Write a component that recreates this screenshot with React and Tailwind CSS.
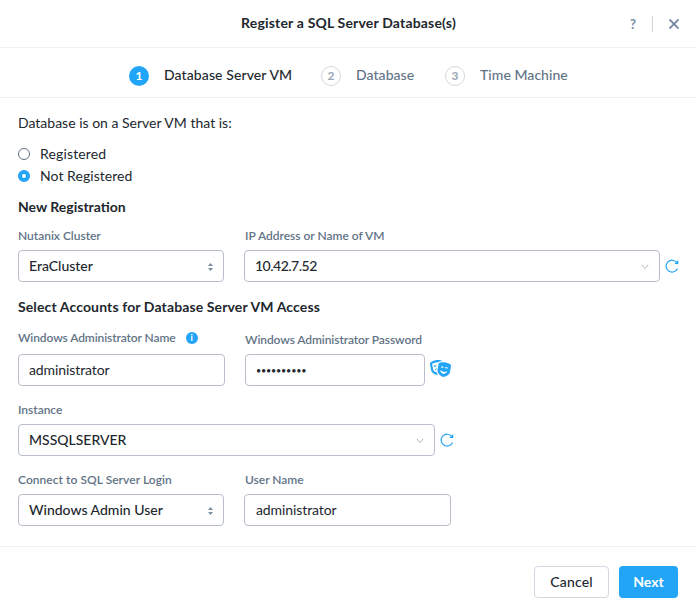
import { FaTheaterMasks } from "react-icons/fa";

function Step({ n, active, children, className }) {
  return (
    <div className={`flex items-center ${className}`}>
      <span
        className={`flex size-5 items-center justify-center rounded-full text-[12px] font-bold ${
          active ? "bg-[#22a5f7] text-white" : "border border-[#d3d7e0] text-[#9aa5b5]"
        }`}
      >
        {n}
      </span>
      <span
        className={`mb-0.5 ml-[15px] whitespace-nowrap ${
          active ? "tracking-[0.1px] text-[#22272e]" : "tracking-[0.05px] text-[#627386]"
        }`}
      >
        {children}
      </span>
    </div>
  );
}

function Label({ children, className = "" }) {
  return (
    <div className={`flex h-5 items-center whitespace-nowrap text-[12px] font-semibold tracking-[-0.02px] text-[#627386] ${className}`}>
      {children}
    </div>
  );
}

function Box({ children, icon, className }) {
  return (
    <div
      className={`flex h-8 items-center justify-between rounded-[4px] border border-[#b8bfca] bg-white pl-2.5 pr-2.5 whitespace-nowrap ${className}`}
    >
      {children}
      {icon}
    </div>
  );
}

function Sorter() {
  return (
    <svg className="mt-0.5" width="5" height="8" viewBox="0 0 5 8" fill="#7b8c9f">
      <path d="M2.5 0 5 3H0Z M2.5 8 0 5H5Z" />
    </svg>
  );
}

function Chevron() {
  return (
    <svg className="mt-px" width="8" height="6" viewBox="0 0 8 6" fill="none" stroke="#b7b7b7">
      <path d="M0.8 0.8 4 4.6 7.2 0.8" />
    </svg>
  );
}

function Refresh() {
  return (
    <svg className="ml-[5px]" width="14" height="14" viewBox="0 0 14 14" fill="none" stroke="#22a5f7" strokeWidth="1.2">
      <path d="M12.5 9.4A5.9 5.9 0 1 1 12 3.9" />
      <path d="M13.3 1V5H9.3Z" fill="#22a5f7" stroke="none" />
    </svg>
  );
}

export default function App() {
  return (
    <div className="flex h-[615px] w-[696px] flex-col bg-white font-[Lato,sans-serif] text-[14px] leading-5 text-[#22272e]">
      <header className="flex h-12 shrink-0 items-center border-b border-[#f0f1f3] pr-[17px]">
        <span className="w-[67px]" />
        <h1 className="mb-0.5 flex-1 text-center font-bold tracking-[0.18px]">Register a SQL Server Database(s)</h1>
        <span className="text-[13px] font-bold text-[#7b8ca0]">?</span>
        <span className="mx-4 h-4 w-px bg-[#d0d6de]" />
        <svg width="10" height="10" viewBox="0 0 10 10" stroke="#7486a0" strokeWidth="1.9">
          <path d="M0.5 0.5 9.5 9.5M9.5 0.5 0.5 9.5" />
        </svg>
      </header>
      <nav className="flex h-[50px] shrink-0 items-center border-b border-[#f0f1f3] pt-[7px] pl-[129px] font-medium">
        <Step n="1" active className="w-48">Database Server VM</Step>
        <Step n="2" className="w-[124px]">Database</Step>
        <Step n="3" className="">Time Machine</Step>
      </nav>
      <main className="flex h-[448px] shrink-0 flex-col pt-[15px] pl-[18px]">
        <p>Database is on a Server VM that is:</p>
        <div className="mt-2.5 flex h-[22px] items-center gap-2.5">
          <span className="size-3 rounded-full border border-[#627386]" />
          <span className="tracking-[0.15px]">Registered</span>
        </div>
        <div className="flex h-[22px] items-center gap-2.5">
          <span className="size-3 rounded-full border-4 border-[#22a5f7]" />
          <span className="tracking-[0.05px]">Not Registered</span>
        </div>
        <h2 className="mt-2.5 font-bold">New Registration</h2>
        <div className="mt-[9px] flex">
          <Label className="w-[227px]">Nutanix Cluster</Label>
          <Label>IP Address or Name of VM</Label>
        </div>
        <div className="mt-1 flex items-center">
          <Box className="w-[206px] font-medium" icon={<Sorter />}>EraCluster</Box>
          <Box className="ml-5 w-[416px] font-medium" icon={<Chevron />}>
            <span className="tracking-[-0.5px]">10.42.7.52</span>
          </Box>
          <Refresh />
        </div>
        <h2 className="mt-[15px] font-bold tracking-[0.12px]">Select Accounts for Database Server VM Access</h2>
        <div className="mt-[11px] flex">
          <Label className="w-[227px]">
            <span className="tracking-[-0.1px]">Windows Administrator Name</span>
            <span className="ml-2.5 flex size-3 items-center justify-center rounded-full bg-[#22a5f7] text-[9px] leading-3 font-bold text-white">
              i
            </span>
          </Label>
          <Label className="mt-0.5">
            <span className="tracking-[-0.09px]">Windows Administrator Password</span>
          </Label>
        </div>
        <div className="mt-1 flex items-center">
          <Box className="w-[207px]"><span className="tracking-[-0.1px]">administrator</span></Box>
          <Box className="ml-5 w-[180px]"><span className="mt-0.5 text-[9px] tracking-[-0.2px]">••••••••••</span></Box>
          <FaTheaterMasks className="mb-[3px] ml-[5px] h-[17px] w-[21px] text-[#22a5f7]" />
        </div>
        <Label className="mt-3.5">Instance</Label>
        <div className="mt-1 flex items-center">
          <Box className="w-[417px] font-medium" icon={<Chevron />}>MSSQLSERVER</Box>
          <Refresh />
        </div>
        <div className="mt-3.5 flex">
          <Label className="w-[227px]">
            <span className="tracking-[0.05px]">Connect to SQL Server Login</span>
          </Label>
          <Label>User Name</Label>
        </div>
        <div className="mt-1 flex">
          <Box className="w-[206px] font-medium" icon={<Sorter />}>Windows Admin User</Box>
          <Box className="ml-5 w-[207px]"><span className="ml-px tracking-[-0.1px]">administrator</span></Box>
        </div>
      </main>
      <footer className="flex h-[69px] justify-end gap-2.5 border-t border-[#f0f1f3] pt-[19px] pr-[18px]">
        <button className="h-8 w-[75px] rounded-[4px] border border-[#d3d7e0] font-medium tracking-[0.15px]">Cancel</button>
        <button className="h-8 w-[59px] rounded-[4px] bg-[#22a5f7] font-bold text-white">Next</button>
      </footer>
    </div>
  );
}
